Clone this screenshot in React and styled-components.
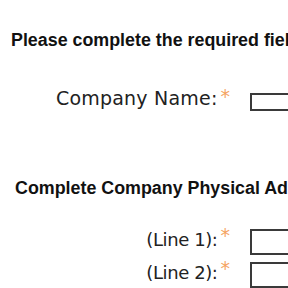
import React from 'react'
import styled, { createGlobalStyle } from 'styled-components'

const GlobalStyle = createGlobalStyle`
  html, body {
    margin: 0;
    padding: 0;
    background: #fff;
  }
  body {
    width: 288px;
    height: 288px;
    overflow: hidden;
  }
`

const Page = styled.div`
  display: flex;
  flex-direction: column;
  width: 288px;
  overflow: hidden;
`

const Heading = styled.h2`
  margin: ${props => props.top}px 0 0 ${props => props.indent}px;
  font-family: "Liberation Sans", Arial, sans-serif;
  font-weight: bold;
  font-size: 17.85px;
  line-height: 20px;
  color: #111;
  white-space: nowrap;
`

const Row = styled.div`
  display: flex;
  align-items: flex-start;
  gap: 20px;
  margin-top: ${props => props.top}px;
`

const Label = styled.label`
  flex: 0 0 230px;
  text-align: right;
  margin-top: ${props => props.shift || 0}px;
  font-family: "DejaVu Sans", Verdana, sans-serif;
  font-size: ${props => props.size}px;
  letter-spacing: ${props => props.track || 0}px;
  line-height: 22px;
  color: #222;
  white-space: nowrap;
`

const Req = styled.span`
  display: inline-block;
  vertical-align: top;
  margin-left: 3px;
  margin-top: ${props => props.lift || 0}px;
  font-family: "DejaVu Sans", Verdana, sans-serif;
  font-size: 19px;
  line-height: 17px;
  letter-spacing: 0;
  color: #f5a462;
`

const Field = styled.input`
  flex: 0 0 auto;
  width: 160px;
  height: ${props => props.h}px;
  box-sizing: border-box;
  border: 2px solid #3a3a3a;
  padding: 0 4px;
  background: #fff;
`

export default function App() {
  return (
    <Page>
      <GlobalStyle />
      <Heading top={30} indent={11}>Please complete the required fields</Heading>
      <Row top={43}>
        <Label size={19} track={0.2} shift={-6}>Company Name:<Req lift={1}>*</Req></Label>
        <Field h={18} />
      </Row>
      <Heading top={67} indent={15}>Complete Company Physical Address</Heading>
      <Row top={31}>
        <Label size={18} track={-0.4}>(Line 1):<Req lift={-2}>*</Req></Label>
        <Field h={26} />
      </Row>
      <Row top={7}>
        <Label size={18} track={-0.4}>(Line 2):<Req lift={-2}>*</Req></Label>
        <Field h={26} />
      </Row>
    </Page>
  )
}
